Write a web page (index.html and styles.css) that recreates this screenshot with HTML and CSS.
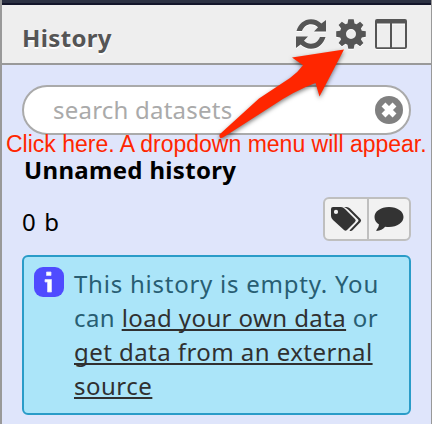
FILE: index.html
```html
<!DOCTYPE html>
<html lang="en">
<head>
<meta charset="utf-8">
<title>History</title>
<link rel="stylesheet" href="styles.css">
</head>
<body>
<div class="panel">
  <div class="masthead"></div>
  <header class="header">
    <h1 class="title">History</h1>
    <div class="actions">
      <svg class="icon" width="30" height="30" viewBox="0 0 30 30"><path d="M.5 12C2.500 5 8 .2 15 .2c4 0 7.500 1.500 10.400 4.200L30 1v11.500H18l4-4.200C20 6.400 17.800 5.300 15 5.300c-4.200 0-7.300 2.500-9 6.700z"/><path d="M29.500 18C27.500 25 22 29.800 15 29.800c-4 0-7.500-1.500-10.400-4.200L0 29V17.500h12l-4 4.200c2 1.900 4.200 3 7 3 4.200 0 7.300-2.500 9-6.700z"/></svg>
      <svg class="icon" width="30" height="30" viewBox="-15 -15 30 30"><path fill-rule="evenodd" d="M-2.700-14.800h5.400l.8 4.200 2.100.9 3.500-2.500 3.300 3.300-2.500 3.500.9 2.100 4 .6v5.400l-4 .7-.9 2.100 2.500 3.500-3.300 3.300-3.500-2.500-2.100.9-.8 4.100h-5.400l-.8-4.100-2.100-.9-3.500 2.500-3.300-3.300 2.500-3.500-.9-2.100-4-.7v-5.400l4-.6.9-2.100-2.500-3.500 3.300-3.300 3.500 2.500 2.100-.9zM0-5A5 5 0 1 0 0 5 5 5 0 1 0 0-5z"/></svg>
      <svg class="icon columns" width="32" height="30" viewBox="0 0 32 30"><path fill-rule="evenodd" d="M2 0h28q2 0 2 2v26q0 2-2 2H2q-2 0-2-2V2Q0 0 2 0zm0 4.500v23.700h13V4.500zm15 0v23.700h13V4.500z"/></svg>
    </div>
  </header>
  <main class="body">
    <div class="search">
      <span class="hint">search datasets</span>
      <svg width="28" height="28" viewBox="-14 -14 28 28"><circle r="14" fill="#808080"/><path d="M-5.500-5.500 5.500 5.500M5.500-5.500-5.500 5.500" stroke="#fff" stroke-width="5.500"/></svg>
    </div>
    <h2 class="name">Unnamed history</h2>
    <div class="meta">
      <span class="size">0 b</span>
      <div class="buttons">
        <span class="button"><svg width="32" height="26" viewBox="0 0 32 26"><path fill-rule="evenodd" d="M1 3q0-2 2-2h8q2 0 4 2l10 10q1.500 1.500 0 3l-8 8q-1.500 1.500-3 0L3 14q-2-2-2-4zm5 .8a2 2 0 1 0 0 4.200 2 2 0 1 0 0-4.200z"/><path d="M14 1h2.500q2 0 3.500 1.500L30.500 13q1.300 1.500 0 3l-8 8.300q-1.500 1.500-3 .2l8.600-9q.9-1 0-2L18 3.500Q16 1.500 14 1z"/></svg></span>
        <span class="button"><svg width="30" height="26" viewBox="0 0 30 26"><path d="M15 1c8.300 0 14.500 4.400 14.500 10S23.300 21 15 21q-2 0-3.800-.3-3.500 3.800-8.500 4.300-.9-.2-.1-1.200 2.200-2.300 2.400-5.300C2 16.700.5 14 .5 11 .5 5.400 6.700 1 15 1z"/></svg></span>
      </div>
    </div>
    <div class="message">
      <svg class="info" width="30" height="30" viewBox="0 0 30 30"><rect width="30" height="30" rx="9" fill="#4f4bff"/><path d="M12.500 5h4.500v3.500h-4.500zM11 12.500h6.500v12.500h-4v-10h-2.500z" fill="#fff" stroke="#dcd9ff" stroke-width=".8" stroke-linejoin="round"/></svg>
      <p class="text"><span class="l1">This history is empty. You</span><br><span class="l2">can <a>load your own data</a> or</span><br><a class="l3">get data from an external</a><br><a class="l4">source</a></p>
    </div>
  </main>
  <div class="callout">Click here. A dropdown menu will appear.</div>
  <svg class="pointer" width="439" height="160" viewBox="0 0 439 160"><path d="M344 49.500 292 57.500l11 7.800q-5 7-13 12.700L259 98.500 220 134q-1.500 2 .5 4.200l2.500-.7L272 106q22-15 43.500-23l4 13.500z"/></svg>
</div>
</body>
</html>
```
FILE: styles.css
```css
* { box-sizing: border-box; }
body { margin: 0; background: #fff; font-family: "Noto Sans", "Open Sans", sans-serif; }
.panel { position: relative; width: 432px; height: 424px; background: #dfe5fb; border-left: 2px solid #999; border-right: 1px solid #999; overflow: hidden; }
.masthead { height: 5px; margin-left: -2px; background: #2c3143; border-bottom: 2px solid #13152a; }
.header { height: 60px; display: flex; justify-content: space-between; padding: 14px 24px 0 20px; background: #eee; border-bottom: 2px solid #999; }
.title { margin: 2px 0 0; font-size: 24px; line-height: 34px; letter-spacing: .35px; font-weight: 700; color: #555; text-shadow: 0 2px #fff; }
.actions { display: flex; gap: 10px; }
.icon { fill: #555; filter: drop-shadow(0 1px 0 #fff); overflow: visible; }
.columns { margin-left: -1px; }
.body { padding: 20px 20px 0; }
.search { height: 50px; display: flex; align-items: center; justify-content: space-between; padding: 0 6px 0 29px; border: 2px solid #aaa; border-radius: 25px; background: #fff; }
.hint { font-size: 24px; line-height: 34px; letter-spacing: .22px; color: #aaa; }
.name { margin: 21px 0 0 2px; font-size: 24px; line-height: 28px; letter-spacing: .32px; color: #000; }
.meta { display: flex; justify-content: space-between; margin-top: 13px; height: 44px; }
.size { font-size: 24px; line-height: 34px; letter-spacing: 1.2px; padding-top: 8px; }
.buttons { display: flex; width: 88px; border: 2px solid #bfbfbf; border-radius: 6px; background: #f2f2f2; }
.button { flex: 0 0 42px; display: flex; align-items: center; justify-content: center; fill: #333; }
.button:first-child { flex-basis: 42px; }
.button + .button { flex-grow: 0; border-left: 2px solid #bfbfbf; }
.message { display: flex; gap: 10px; height: 160px; margin-top: 14px; padding: 10px; border: 2px solid #2a9cc8; border-radius: 6px; background: #abe5f9; }
.info { flex: none; }
.text { margin: 0; font-size: 24px; line-height: 34px; white-space: nowrap; color: #285e73; }
.l1 { letter-spacing: .76px; }
.l2 { letter-spacing: .4px; }
.l3 { letter-spacing: .44px; }
.l4 { letter-spacing: .5px; }
.text a { color: #303030; text-decoration: underline; text-decoration-thickness: 2px; text-underline-offset: 2px; text-decoration-skip-ink: none; }
.callout { position: absolute; left: 4px; top: 132px; font-family: "Liberation Sans", sans-serif; font-size: 23px; line-height: 24px; color: #ff2600; white-space: nowrap; }
.pointer { position: absolute; left: -2px; top: 0; fill: #ff2600; filter: drop-shadow(0 2px 2px rgba(0,0,0,.5)); }
```
